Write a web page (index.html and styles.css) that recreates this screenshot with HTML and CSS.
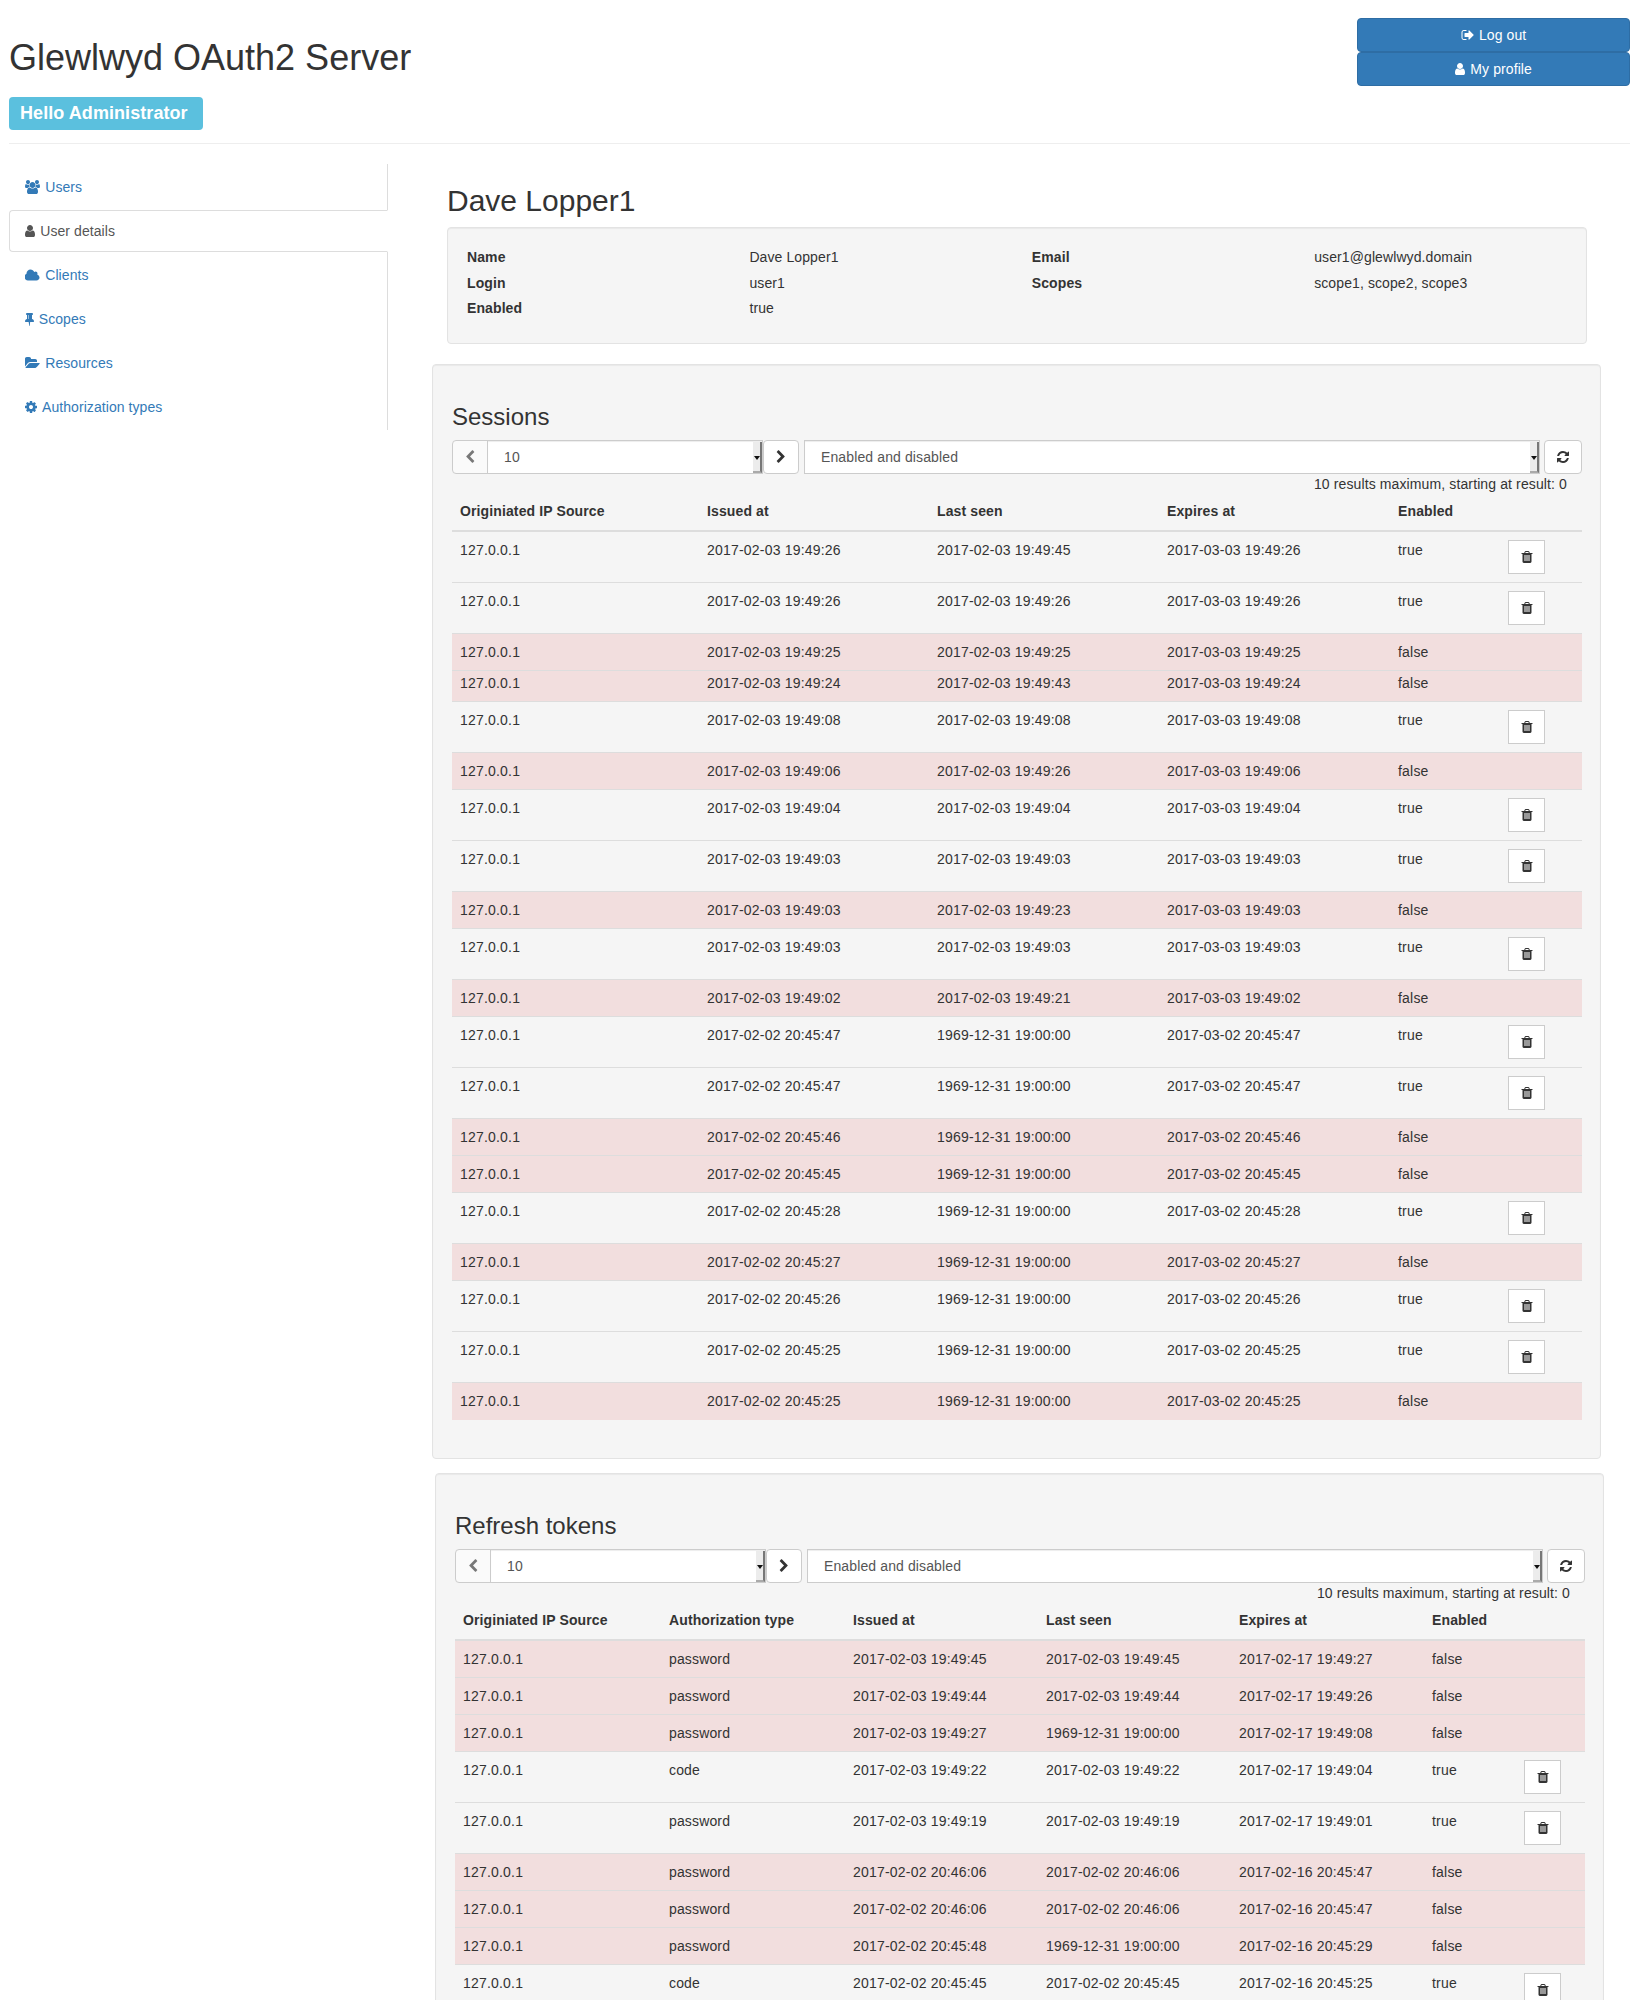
FILE: index.html
```html
<!DOCTYPE html>
<html lang="en">
<head>
<meta charset="utf-8">
<title>Glewlwyd OAuth2 Server</title>
<link rel="stylesheet" href="styles.css">
</head>
<body>
<svg class="sprite" xmlns="http://www.w3.org/2000/svg">
<symbol id="i-user" viewBox="256 0 1280 1792"><path d="M1536 1399q0 109-62.5 187t-150.5 78h-854q-88 0-150.5-78t-62.5-187q0-85 8.5-160.5t31.5-152 58.5-131 94-89 134.5-34.5q131 128 313 128t313-128q76 0 134.5 34.5t94 89 58.5 131 31.5 152 8.5 160.5zm-256-887q0 159-112.5 271.5t-271.5 112.5-271.5-112.5-112.5-271.5 112.5-271.5 271.5-112.5 271.5 112.5 112.5 271.5z"/></symbol>
<symbol id="i-left" viewBox="0 0 1792 1792"><path d="M1427 301l-531 531 531 531q19 19 19 45t-19 45l-166 166q-19 19-45 19t-45-19l-742-742q-19-19-19-45t19-45l742-742q19-19 45-19t45 19l166 166q19 19 19 45t-19 45z"/></symbol>
<symbol id="i-right" viewBox="0 0 1792 1792"><path d="M1363 877l-742 742q-19 19-45 19t-45-19l-166-166q-19-19-19-45t19-45l531-531-531-531q-19-19-19-45t19-45l166-166q19-19 45-19t45 19l742 742q19 19 19 45t-19 45z"/></symbol>
<symbol id="i-trash" viewBox="0 0 1792 1792"><path d="M704 1376v-704q0-14-9-23t-23-9h-64q-14 0-23 9t-9 23v704q0 14 9 23t23 9h64q14 0 23-9t9-23zm256 0v-704q0-14-9-23t-23-9h-64q-14 0-23 9t-9 23v704q0 14 9 23t23 9h64q14 0 23-9t9-23zm256 0v-704q0-14-9-23t-23-9h-64q-14 0-23 9t-9 23v704q0 14 9 23t23 9h64q14 0 23-9t9-23zm-544-992h448l-48-117q-7-9-17-11h-317q-10 2-17 11zm928 32v64q0 14-9 23t-23 9h-96v948q0 83-47 143.5t-113 60.5h-832q-66 0-113-58.5t-47-141.5v-952h-96q-14 0-23-9t-9-23v-64q0-14 9-23t23-9h309l70-167q15-37 54-63t79-26h320q40 0 79 26t54 63l70 167h309q14 0 23 9t9 23z"/></symbol>
<symbol id="i-refresh" viewBox="0 0 1792 1792"><path d="M1639 1056q0 5-1 7-64 268-268 434.5t-478 166.5q-146 0-282.5-55t-243.5-157l-129 129q-19 19-45 19t-45-19-19-45v-448q0-26 19-45t45-19h448q26 0 45 19t19 45-19 45l-137 137q71 66 161 102t187 36q134 0 250-65t186-179q11-17 53-117 8-23 30-23h192q13 0 22.5 9.5t9.5 22.5zm25-800v448q0 26-19 45t-45 19h-448q-26 0-45-19t-19-45 19-45l138-138q-148-137-349-137-134 0-250 65t-186 179q-11 17-53 117-8 23-30 23h-199q-13 0-22.5-9.5t-9.5-22.5v-7q65-268 270-434.5t480-166.5q146 0 284 55.5t245 156.5l130-129q19-19 45-19t45 19 19 45z"/></symbol>
<symbol id="i-cog" viewBox="128 0 1536 1792"><path d="M1152 896q0-106-75-181t-181-75-181 75-75 181 75 181 181 75 181-75 75-181zm512-109v222q0 12-8 23t-20 13l-185 28q-19 54-39 91 35 50 107 138 10 12 10 25t-9 23q-27 37-99 108t-94 71q-12 0-26-9l-138-108q-44 23-91 38-16 136-29 186-7 28-36 28h-222q-14 0-24.5-8.5t-11.5-21.5l-28-184q-49-16-90-37l-141 107q-10 9-25 9-14 0-25-11-126-114-165-168-7-10-7-23 0-12 8-23 15-21 51-66.5t54-70.5q-27-50-41-99l-183-27q-13-2-21-12.5t-8-23.5v-222q0-12 8-23t19-13l186-28q14-46 39-92-40-57-107-138-10-12-10-24 0-10 9-23 26-36 98.5-107.5t94.5-71.5q13 0 26 10l138 107q44-23 91-38 16-136 29-186 7-28 36-28h222q14 0 24.5 8.5t11.5 21.5l28 184q49 16 90 37l142-107q9-9 24-9 13 0 25 10 129 119 165 170 7 8 7 22 0 12-8 23-15 21-51 66.5t-54 70.5q26 50 41 98l183 28q13 2 21 12.5t8 23.5z"/></symbol>
<symbol id="i-cloud" viewBox="0 0 1920 1792"><path d="M1856 1216q0 159-112.5 271.5t-271.5 112.5h-1088q-185 0-316.5-131.5t-131.5-316.5q0-132 71-241.5t187-163.5q-2-28-2-43 0-212 150-362t362-150q158 0 286.5 88t187.5 230q70-62 166-62 106 0 181 75t75 181q0 75-41 138 129 30 213 134.5t84 239.5z"/></symbol>
<symbol id="i-folder" viewBox="0 0 1920 1792"><path d="M1879 952q0 31-31 66l-336 396q-43 51-120.5 86.5t-143.5 35.5h-1088q-34 0-60.5-13t-26.5-43q0-31 31-66l336-396q43-51 120.5-86.5t143.5-35.5h1088q34 0 60.5 13t26.5 43zm-343-344v160h-832q-94 0-197 47.5t-164 119.5l-337 396-5 6q0-4-.5-12.5t-.5-12.5v-960q0-92 66-158t158-66h320q92 0 158 66t66 158v32h544q92 0 158 66t66 158z"/></symbol>
<symbol id="i-users" viewBox="0 0 1920 1792"><path d="M593 896q-162 5-265 128h-134q-82 0-138-40.5t-56-118.5q0-353 124-353 6 0 43.5 21t97.5 42.5 119 21.5q67 0 133-23-5 37-5 66 0 139 81 256zm1071 637q0 120-73 189.5t-194 69.5h-874q-121 0-194-69.5t-73-189.5q0-53 3.5-103.5t14-109 26.5-108.5 43-97.5 62-81 85.5-53.5 111.5-20q10 0 43 21.5t73 48 107 48 135 21.5 135-21.5 107-48 73-48 43-21.5q61 0 111.5 20t85.5 53.5 62 81 43 97.5 26.5 108.5 14 109 3.5 103.5zm-1024-1277q0 106-75 181t-181 75-181-75-75-181 75-181 181-75 181 75 75 181zm704 384q0 159-112.5 271.5t-271.5 112.5-271.5-112.5-112.5-271.5 112.5-271.5 271.5-112.5 271.5 112.5 112.5 271.5zm576 225q0 78-56 118.5t-138 40.5h-134q-103-123-265-128 81-117 81-256 0-29-5-66 66 23 133 23 59 0 119-21.5t97.5-42.5 43.5-21q124 0 124 353zm-128-609q0 106-75 181t-181 75-181-75-75-181 75-181 181-75 181 75 75 181z"/></symbol>
<symbol id="i-pin" viewBox="0 0 1152 1792"><path d="M480 864v-448q0-14-9-23t-23-9-23 9-9 23v448q0 14 9 23t23 9 23-9 9-23zm672 352q0 26-19 45t-45 19h-429l-51 483q-2 12-10.5 20.5t-20.5 8.5h-1q-27 0-32-27l-76-485h-404q-26 0-45-19t-19-45q0-123 78.5-221.5t177.5-98.5v-512q-52 0-90-38t-38-90 38-90 90-38h640q52 0 90 38t38 90-38 90-90 38v512q99 0 177.5 98.5t78.5 221.5z"/></symbol>
<symbol id="i-signout" viewBox="0 0 1664 1792"><path d="M704 1440q0 4 1 20t.5 26.5-3 23.5-10 19.5-20.5 6.5h-320q-119 0-203.5-84.5t-84.5-203.5v-704q0-119 84.5-203.5t203.5-84.5h320q13 0 22.5 9.5t9.5 22.5q0 4 1 20t.5 26.5-3 23.5-10 19.5-20.5 6.5h-320q-66 0-113 47t-47 113v704q0 66 47 113t113 47h312l11.5 1 11.5 3 8 5.5 7 9 2 13.5zm928-544q0 26-19 45l-544 544q-19 19-45 19t-45-19-19-45v-288h-448q-26 0-45-19t-19-45v-384q0-26 19-45t45-19h448v-288q0-26 19-45t45-19 45 19l544 544q19 19 19 45z"/></symbol>
</svg>

<header class="page-header">
  <div class="brand">
    <h1 class="title">Glewlwyd OAuth2 Server</h1>
    <span class="hello">Hello Administrator</span>
  </div>
  <div class="account">
    <a class="btn-primary"><svg class="ico ico-signout"><use href="#i-signout"/></svg> Log out</a>
    <a class="btn-primary"><svg class="ico ico-user"><use href="#i-user"/></svg> My profile</a>
  </div>
</header>

<div class="layout">
  <nav class="side">
    <a class="tab"><svg class="ico ico-wide"><use href="#i-users"/></svg> Users</a>
    <a class="tab active"><svg class="ico ico-user"><use href="#i-user"/></svg> User details</a>
    <a class="tab"><svg class="ico ico-wide"><use href="#i-cloud"/></svg> Clients</a>
    <a class="tab"><svg class="ico ico-pin"><use href="#i-pin"/></svg> Scopes</a>
    <a class="tab"><svg class="ico ico-wide"><use href="#i-folder"/></svg> Resources</a>
    <a class="tab"><svg class="ico ico-cog"><use href="#i-cog"/></svg> Authorization types</a>
  </nav>

  <main class="main">
    <h2 class="user-name">Dave Lopper1</h2>
    <section class="summary">
      <div class="summary-grid">
        <b>Name</b><span>Dave Lopper1</span><b>Email</b><span>user1@glewlwyd.domain</span>
        <b>Login</b><span>user1</span><b>Scopes</b><span>scope1, scope2, scope3</span>
        <b>Enabled</b><span>true</span>
      </div>
    </section>

    <section class="panel panel-sessions">
      <h3 class="panel-title">Sessions</h3>
      <div class="toolbar">
        <button class="tool tool-prev"><svg class="chev"><use href="#i-left"/></svg></button>
        <div class="sel sel-limit"><span>10</span><i class="sel-arrow"></i></div>
        <button class="tool tool-next"><svg class="chev"><use href="#i-right"/></svg></button>
        <div class="sel sel-filter"><span>Enabled and disabled</span><i class="sel-arrow"></i></div>
        <button class="tool tool-refresh"><svg class="refresh"><use href="#i-refresh"/></svg></button>
      </div>
      <p class="result-note">10 results maximum, starting at result: 0</p>
      <table class="grid">
        <colgroup><col class="s1"><col class="s2"><col class="s3"><col class="s4"><col class="s5"><col class="s6"></colgroup>
        <thead><tr><th>Originiated IP Source</th><th>Issued at</th><th>Last seen</th><th>Expires at</th><th>Enabled</th><th></th></tr></thead>
        <tbody id="sessions"></tbody>
      </table>
    </section>

    <section class="panel panel-tokens">
      <h3 class="panel-title">Refresh tokens</h3>
      <div class="toolbar">
        <button class="tool tool-prev"><svg class="chev"><use href="#i-left"/></svg></button>
        <div class="sel sel-limit"><span>10</span><i class="sel-arrow"></i></div>
        <button class="tool tool-next"><svg class="chev"><use href="#i-right"/></svg></button>
        <div class="sel sel-filter"><span>Enabled and disabled</span><i class="sel-arrow"></i></div>
        <button class="tool tool-refresh"><svg class="refresh"><use href="#i-refresh"/></svg></button>
      </div>
      <p class="result-note">10 results maximum, starting at result: 0</p>
      <table class="grid">
        <colgroup><col class="t1"><col class="t2"><col class="t3"><col class="t4"><col class="t5"><col class="t6"><col class="t7"></colgroup>
        <thead><tr><th>Originiated IP Source</th><th>Authorization type</th><th>Issued at</th><th>Last seen</th><th>Expires at</th><th>Enabled</th><th></th></tr></thead>
        <tbody id="tokens"></tbody>
      </table>
    </section>
  </main>
</div>
<script src="app.js"></script>
</body>
</html>
```

FILE: app.js
```js
var E = "1969-12-31 19:00:00";
var sessions = [
["2017-02-03 19:49:26","2017-02-03 19:49:45","2017-03-03 19:49:26",1],
["2017-02-03 19:49:26","2017-02-03 19:49:26","2017-03-03 19:49:26",1],
["2017-02-03 19:49:25","2017-02-03 19:49:25","2017-03-03 19:49:25",0],
["2017-02-03 19:49:24","2017-02-03 19:49:43","2017-03-03 19:49:24",0,"short"],
["2017-02-03 19:49:08","2017-02-03 19:49:08","2017-03-03 19:49:08",1],
["2017-02-03 19:49:06","2017-02-03 19:49:26","2017-03-03 19:49:06",0],
["2017-02-03 19:49:04","2017-02-03 19:49:04","2017-03-03 19:49:04",1],
["2017-02-03 19:49:03","2017-02-03 19:49:03","2017-03-03 19:49:03",1],
["2017-02-03 19:49:03","2017-02-03 19:49:23","2017-03-03 19:49:03",0],
["2017-02-03 19:49:03","2017-02-03 19:49:03","2017-03-03 19:49:03",1],
["2017-02-03 19:49:02","2017-02-03 19:49:21","2017-03-03 19:49:02",0],
["2017-02-02 20:45:47",E,"2017-03-02 20:45:47",1],
["2017-02-02 20:45:47",E,"2017-03-02 20:45:47",1],
["2017-02-02 20:45:46",E,"2017-03-02 20:45:46",0],
["2017-02-02 20:45:45",E,"2017-03-02 20:45:45",0],
["2017-02-02 20:45:28",E,"2017-03-02 20:45:28",1],
["2017-02-02 20:45:27",E,"2017-03-02 20:45:27",0],
["2017-02-02 20:45:26",E,"2017-03-02 20:45:26",1],
["2017-02-02 20:45:25",E,"2017-03-02 20:45:25",1],
["2017-02-02 20:45:25",E,"2017-03-02 20:45:25",0]
];
var tokens = [
["password","2017-02-03 19:49:45","2017-02-03 19:49:45","2017-02-17 19:49:27",0],
["password","2017-02-03 19:49:44","2017-02-03 19:49:44","2017-02-17 19:49:26",0],
["password","2017-02-03 19:49:27",E,"2017-02-17 19:49:08",0],
["code","2017-02-03 19:49:22","2017-02-03 19:49:22","2017-02-17 19:49:04",1],
["password","2017-02-03 19:49:19","2017-02-03 19:49:19","2017-02-17 19:49:01",1],
["password","2017-02-02 20:46:06","2017-02-02 20:46:06","2017-02-16 20:45:47",0],
["password","2017-02-02 20:46:06","2017-02-02 20:46:06","2017-02-16 20:45:47",0],
["password","2017-02-02 20:45:48",E,"2017-02-16 20:45:29",0],
["code","2017-02-02 20:45:45","2017-02-02 20:45:45","2017-02-16 20:45:25",1]
];
function fill(id, rows) {
  var body = document.getElementById(id), html = "";
  rows.forEach(function (r) {
    var short = r[r.length - 1] === "short";
    var cells = short ? r.slice(0, -1) : r;
    var on = cells[cells.length - 1];
    html += '<tr class="' + (on ? "" : "off") + (short ? " short" : "") + '"><td>127.0.0.1</td>';
    cells.slice(0, -1).forEach(function (c) { html += "<td>" + c + "</td>"; });
    html += "<td>" + (on ? "true" : "false") + "</td><td>";
    if (on) html += '<button class="tool del"><svg class="trash"><use href="#i-trash"/></svg></button>';
    html += "</td></tr>";
  });
  body.innerHTML = html;
}
fill("sessions", sessions);
fill("tokens", tokens);
```

FILE: styles.css
```css
* { box-sizing: border-box; }
html { height: 2000px; overflow: hidden; }
body { margin: 0; padding: 0 14px 0 9px; font: 14px/20px "Liberation Sans", Arial, sans-serif; color: #333; background: #fff; }
.sprite { display: none; }
.ico { fill: currentColor; vertical-align: -2px; height: 14px; margin-right: 1.3px; }
.ico-wide { width: 15px; }
.ico-user { width: 10px; }
.ico-pin { width: 9px; margin-right: .8px; }
.ico-cog { width: 12px; margin-right: 1.8px; }
.ico-signout { width: 13px; }

.page-header { display: flex; justify-content: space-between; height: 144px; border-bottom: 1px solid #eee; }
.title { margin: 38px 0 0; font-size: 36px; font-weight: 400; line-height: 40px; }
.hello { display: inline-block; margin-top: 19px; width: 194px; height: 33px; padding: 4px 11px 0; background: #5bc0de; color: #fff; font-size: 18px; font-weight: 700; line-height: 25px; letter-spacing: .07px; white-space: nowrap; border-radius: 4px; }
.account { display: flex; flex-direction: column; width: 273px; margin-top: 18px; }
.btn-primary { display: block; height: 34px; line-height: 32px; text-align: center; color: #fff; background: #337ab7; border: 1px solid #2e6da4; border-radius: 4px; letter-spacing: .1px; }

.layout { display: flex; align-items: flex-start; margin-top: 20px; }
.side { width: 379px; flex: none; padding-bottom: 2px; border-right: 1px solid #ddd; letter-spacing: .07px; }
.tab { display: block; height: 44px; padding: 13px 16px 11px; color: #337ab7; }
.tab:first-child { height: 46px; }
.tab.active { height: 42px; margin-right: -1px; padding: 10px 15px; color: #555; background: #fff; border: 1px solid #ddd; border-right-color: #fff; border-radius: 4px 0 0 4px; }

.main { flex: 1; min-width: 0; padding-left: 59px; padding-right: 43px; }
.user-name { margin: 20px 0 0; font-size: 30px; font-weight: 400; line-height: 33px; }
.summary { margin-top: 10px; height: 117px; padding: 19px; background: #f5f5f5; border: 1px solid #e3e3e3; border-radius: 4px; box-shadow: inset 0 1px 1px rgba(0,0,0,.05); letter-spacing: .1px; }
.summary-grid { display: grid; grid-template-columns: repeat(4, 282.4px); row-gap: 5.5px; }

.panel { background: #f5f5f5; border: 1px solid #e3e3e3; border-radius: 4px; box-shadow: inset 0 1px 1px rgba(0,0,0,.05); padding: 19px; width: 1169px; }
.panel-sessions { margin: 20px 0 0 -15px; height: 1095px; }
.panel-tokens { margin: 14px 0 0 -12px; }
.panel-title { margin: 16px 0 0; font-size: 24px; font-weight: 400; line-height: 34px; }
.toolbar { display: flex; height: 34px; margin-top: 6px; width: 1130px; }
.tool { display: flex; align-items: center; justify-content: center; height: 34px; padding: 0; background: #fff; border: 1px solid #ccc; color: #333; }
.tool-prev { width: 36px; background: #fafafa; border-radius: 4px 0 0 4px; }
.tool-prev .chev { opacity: .65; }
.tool-next { width: 36px; border-radius: 4px; }
.tool-refresh { width: 38px; border-radius: 4px; margin-left: 4px; }
.chev, .refresh, .trash { width: 14px; height: 14px; fill: currentColor; }
.sel { position: relative; height: 34px; padding: 6px 16px; background: #fff; border: 1px solid #ccc; color: #555; letter-spacing: .12px; box-shadow: inset 0 1px 1px rgba(0,0,0,.075); }
.sel-limit { width: 276px; margin-left: -1px; }
.sel-filter { width: 736px; margin-left: 5px; }
.sel-arrow { position: absolute; right: 0; top: 1px; bottom: 0; width: 9px; background: #ececec; border-right: 2px solid #777; border-bottom: 2px solid #aaa; }
.sel-arrow::after { content: ""; position: absolute; left: 1px; top: 14px; border: 3px solid transparent; border-top: 4px solid #111; border-bottom: 0; }
.result-note { margin: 0; width: 1115px; text-align: right; line-height: 20px; letter-spacing: .12px; }

.grid { table-layout: fixed; border-collapse: collapse; width: 1130px; }
.grid th { padding: 7px 8px 9px; text-align: left; font-weight: 700; line-height: 20px; letter-spacing: .12px; border-bottom: 2px solid #ddd; }
.grid td { padding: 8px; vertical-align: top; line-height: 20px; letter-spacing: .2px; border-top: 1px solid #ddd; }
#tokens td:nth-child(2) { letter-spacing: .15px; }
.grid tr.off td { background: #f2dede; height: 37px; }
.grid tr.short td { padding-top: 2px; padding-bottom: 8px; height: 30px; }
.del { width: 37px; }
.s1 { width: 247px; } .s2 { width: 230px; } .s3 { width: 230px; } .s4 { width: 231px; } .s5 { width: 110px; } .s6 { width: 82px; }
.t1 { width: 206px; } .t2 { width: 184px; } .t3 { width: 193px; } .t4 { width: 193px; } .t5 { width: 193px; } .t6 { width: 92px; } .t7 { width: 69px; }
```
